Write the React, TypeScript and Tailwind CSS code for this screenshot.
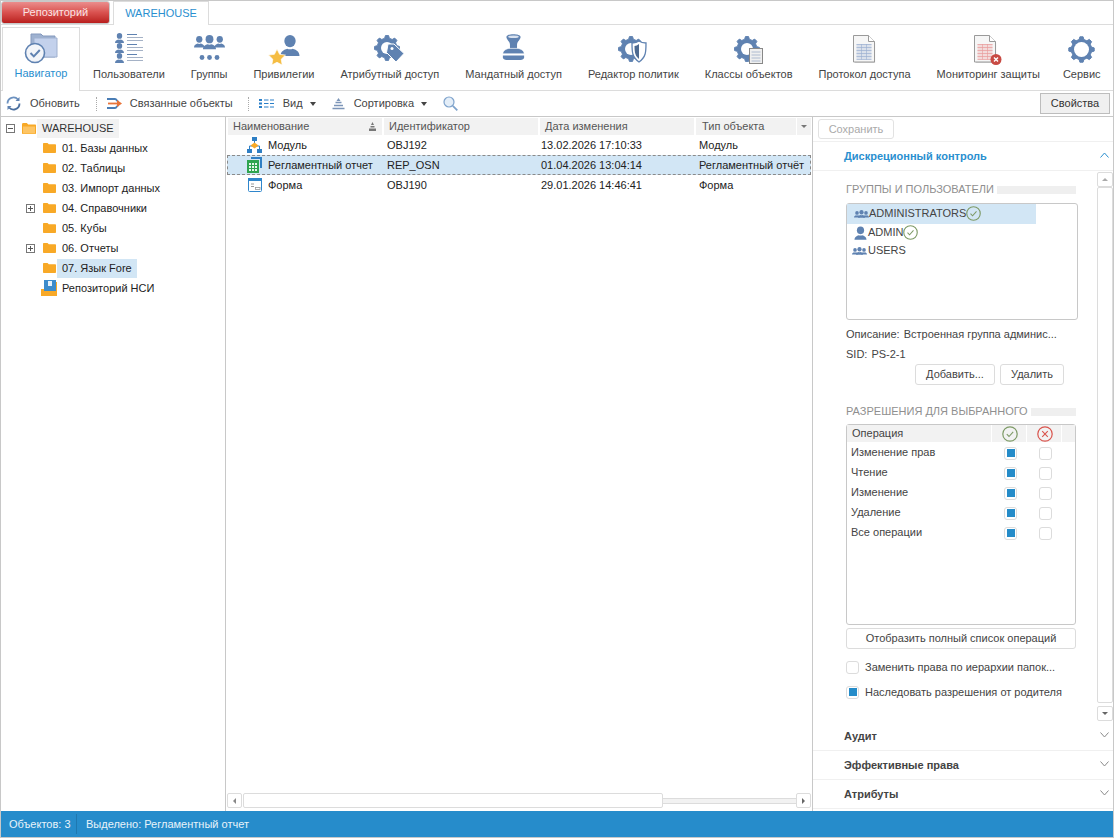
import React from 'react';

// ─── Icons ───────────────────────────────────────────────────────────────────

const STEEL = '#5f82b1';

function gearPath(cx: number, cy: number, outer: number, inner: number, teeth: number): string {
  const pts: string[] = [];
  const step = (Math.PI * 2) / teeth;
  for (let i = 0; i < teeth; i++) {
    const a = i * step - Math.PI / 2;
    const w = step * 0.2;
    const coords: [number, number][] = [
      [inner, a - w * 1.5],
      [outer, a - w * 0.8],
      [outer, a + w * 0.8],
      [inner, a + w * 1.5],
    ];
    coords.forEach(([r, t]) => pts.push(`${(cx + r * Math.cos(t)).toFixed(2)} ${(cy + r * Math.sin(t)).toFixed(2)}`));
  }
  return `M${pts.join('L')}Z`;
}

function Gear({ cx, cy, outer, hole }: { cx: number; cy: number; outer: number; hole: number }) {
  return (
    <>
      <path d={gearPath(cx, cy, outer, outer * 0.8, 8)} fill={STEEL} stroke={STEEL} strokeLinejoin="round" />
      <circle cx={cx} cy={cy} r={hole} fill="#fff" />
    </>
  );
}

function Person({ x = 0, y = 0, s = 1, fill = STEEL }: { x?: number; y?: number; s?: number; fill?: string }) {
  return (
    <g transform={`translate(${x} ${y}) scale(${s})`} fill={fill}>
      <ellipse cx="5" cy="3.2" rx="3" ry="3.2" />
      <path d="M0 11c0-2.5 2-3.3 3.5-3.8.9.4 2.1.4 3 0C8 7.7 10 8.500 10 11z" />
    </g>
  );
}

function Folder({ open }: { open?: boolean }) {
  if (open) {
    return (
      <svg width="14" height="11" viewBox="0 0 14 11" className="shrink-0">
        <path d="M0 1.5C0 .7.5 0 1.2 0h3.600l1.400 1.400H13c.6 0 1 .4 1 1V10c0 .6-.4 1-1 1H1c-.6 0-1-.4-1-1z" fill="#f8a927" />
        <rect x="1" y="3.5" width="12" height="7" fill="#fdc565" />
      </svg>
    );
  }
  return (
    <svg width="13" height="10" viewBox="0 0 13 10" className="shrink-0">
      <path d="M0 1C0 .4.4 0 1 0h3.500l1.300 1.300H12c.6 0 1 .4 1 1V9c0 .6-.4 1-1 1H1c-.6 0-1-.4-1-1z" fill="#f8a927" />
    </svg>
  );
}

function Expander({ minus }: { minus?: boolean }) {
  return (
    <svg width="9" height="9" viewBox="0 0 9 9" className="shrink-0">
      <rect x=".5" y=".5" width="8" height="8" fill="#fff" stroke="#777" />
      <path d={minus ? 'M2 4.500h5' : 'M2 4.500h5M4.500 2v5'} stroke="#555" />
    </svg>
  );
}

function CheckCircle({ size = 15 }: { size?: number }) {
  return (
    <svg width={size} height={size} viewBox="0 0 16 16" className="shrink-0">
      <circle cx="8" cy="8" r="7.2" fill="none" stroke="#7d9a66" strokeWidth="1.2" />
      <path d="M4.8 8.200l2.200 2.300 4.200-4.700" fill="none" stroke="#7d9a66" strokeWidth="1.1" />
    </svg>
  );
}

function CrossCircle() {
  return (
    <svg width="16" height="16" viewBox="0 0 16 16" className="shrink-0">
      <circle cx="8" cy="8" r="7.2" fill="none" stroke="#d9534c" strokeWidth="1.2" />
      <path d="M5.2 5.200l5.600 5.600M10.800 5.200l-5.600 5.600" stroke="#d9534c" strokeWidth="1.1" />
    </svg>
  );
}

function GroupSmall() {
  return (
    <svg width="15" height="11" viewBox="0 0 15 11" className="shrink-0">
      <Person x={0} y={3} s={0.6} />
      <Person x={4} y={2} s={0.7} />
      <Person x={9} y={3} s={0.6} />
    </svg>
  );
}

function PersonSmall() {
  return (
    <svg width="13" height="14" viewBox="0 0 13 14" className="shrink-0">
      <Person x={0.5} y={0.5} s={1.2} />
    </svg>
  );
}

function SheetBase({ tint }: { tint: string }) {
  const rows = [9, 12, 15, 18, 21, 24];
  return (
    <>
      <path d="M1.500 1.500h14l6 6v20h-20z" fill="#d8d8d8" transform="translate(.6 .6)" />
      <path d="M.5 .5h15l6 6v20.500H.5z" fill="#f6f6f6" stroke="#9a9a9a" />
      <path d="M15.500 .5v6h6" fill="#fff" stroke="#9a9a9a" />
      <rect x="3.500" y="9" width="15" height="15" fill={tint} opacity="0.3" />
      {rows.map((r) => (
        <path key={r} d={`M3.500 ${r + 0.5}h15`} stroke={tint} opacity="0.7" />
      ))}
      <path d="M8.500 9v15.500M13.500 9v15.500" stroke={tint} opacity="0.6" />
    </>
  );
}

function RibbonIcon({ kind }: { kind: string }) {
  switch (kind) {
    case 'nav':
      return (
        <svg width="40" height="34" viewBox="0 0 40 34">
          <path d="M10 3h10l2 2h12v21H10z" fill="#9eb1d0" stroke="#8499bd" />
          <path d="M13 7h23v19H13z" fill="#c3d1ec" stroke="#9fb0cf" />
          <circle cx="14" cy="22" r="9.5" fill="#f3f5f9" stroke="#5f82b1" strokeWidth="1.6" />
          <path d="M9.500 22l3.300 3.400 6-6.400" fill="none" stroke="#5f82b1" strokeWidth="2" />
        </svg>
      );
    case 'users':
      return (
        <svg width="28" height="30" viewBox="0 0 28 30">
          <Person x={0} y={0} s={0.9} />
          <Person x={0} y={10} s={0.9} />
          <Person x={0} y={20} s={0.9} />
          {[1, 11, 21].map((y) => (
            <g key={y} stroke="#a5b2c6">
              <path d={`M12 ${y + 0.5}h10`} stroke="#5f82b1" />
              <path d={`M12 ${y + 3.5}h16M12 ${y + 6.5}h16`} />
            </g>
          ))}
        </svg>
      );
    case 'groups':
      return (
        <svg width="31" height="30" viewBox="0 0 31 30">
          <Person x={0} y={3} s={1.05} />
          <Person x={9} y={2} s={1.3} />
          <Person x={20.5} y={3} s={1.05} />
          <circle cx="8" cy="24.500" r="2.4" fill={STEEL} />
          <circle cx="15.500" cy="24.500" r="2.4" fill={STEEL} />
          <circle cx="23" cy="24.500" r="2.4" fill={STEEL} />
        </svg>
      );
    case 'priv':
      return (
        <svg width="32" height="33" viewBox="0 0 32 33">
          <Person x={12.5} y={2} s={1.9} />
          <path d="M9 16l2.600 5.300 5.900.8-4.300 4.100 1 5.800L9 29.300 3.800 32l1-5.800-4.300-4.100 5.900-.8z" fill="#f5bd43" stroke="#fff" strokeWidth=".7" />
        </svg>
      );
    case 'attr':
      return (
        <svg width="32" height="30" viewBox="0 0 32 30" className="mt-[2px]">
          <Gear cx={13} cy={13} outer={12.5} hole={6} />
          <path d="M14 9h6l10 9.500-8 8.500-9.500-9.500z" fill={STEEL} stroke="#fff" />
          <circle cx="18" cy="13.500" r="1.5" fill="#fff" />
        </svg>
      );
    case 'stamp':
      return (
        <svg width="23" height="29" viewBox="0 0 26 30">
          <path d="M5 3c0-4 16-4 16 0 0 3-4 5-4 9v4H9v-4c0-4-4-6-4-9z" fill={STEEL} />
          <ellipse cx="13" cy="2.800" rx="6" ry="1.500" fill="#d9e2ef" />
          <path d="M1 22c0-4 5-6 8-6h8c3 0 8 2 8 6z" fill={STEEL} stroke="#fff" strokeWidth=".6" />
          <path d="M1 24h24v2c0 2-2 3-4 3H5c-2 0-4-1-4-3z" fill={STEEL} />
        </svg>
      );
    case 'policy':
      return (
        <svg width="30" height="28" viewBox="0 0 30 28" className="mt-[3px]">
          <Gear cx={13} cy={13} outer={12.5} hole={6} />
          <path d="M21 5c2 1.500 4.500 2 7 2 0 9 0 14-7 19-7-5-7-10-7-19 2.500 0 5-.5 7-2z" fill="#fff" stroke={STEEL} strokeWidth="1.3" />
          <path d="M21 8v15c-3.500-3-4.500-6-4.500-13 1.700 0 3-1 4.500-2z" fill="#4d6a91" />
        </svg>
      );
    case 'classes':
      return (
        <svg width="30" height="28" viewBox="0 0 30 28" className="mt-[3px]">
          <Gear cx={13} cy={13} outer={12.5} hole={6} />
          <rect x="15.500" y="12.500" width="13" height="15" fill="#efefef" stroke="#888" />
          <path d="M17.500 16h9M17.500 19h9M17.500 22h9M17.500 25h9" stroke="#aebbd0" />
        </svg>
      );
    case 'log':
      return (
        <svg width="23" height="29" viewBox="0 0 23 29" className="mt-[2px]">
          <SheetBase tint="#9bb0d2" />
        </svg>
      );
    case 'monitor':
      return (
        <svg width="29" height="31" viewBox="0 0 29 31" className="mt-[2px]">
          <SheetBase tint="#e99a9a" />
          <circle cx="22" cy="24.500" r="5.5" fill="#c84a43" />
          <path d="M20 22.500l4 4M24 22.500l-4 4" stroke="#fff" strokeWidth="1.400" />
        </svg>
      );
    default:
      return (
        <svg width="27" height="27" viewBox="0 0 27 27" className="mt-[3px]">
          <Gear cx={13.5} cy={13.5} outer={12.8} hole={7.5} />
        </svg>
      );
  }
}

function Chevron({ up }: { up?: boolean }) {
  return (
    <svg width="9" height="6" viewBox="0 0 9 6" className="-mt-[3px]">
      <path d={up ? 'M.5 5.500l4-4.500 4 4.500' : 'M.5 .5l4 4.500 4-4.500'} fill="none" stroke={up ? '#2a8fcf' : '#8a8a8a'} />
    </svg>
  );
}

function Caret() {
  return <span className="ml-[7px] h-0 w-0 border-x-[3.5px] border-t-[4px] border-x-transparent border-t-[#444]" />;
}

function Box({ checked }: { checked?: boolean }) {
  return (
    <span className="flex h-[13px] w-[13px] shrink-0 items-center justify-center rounded-[3px] border border-[#dcdcdc] bg-white">
      {checked && <span className="h-[8px] w-[8px] bg-[#258cc9]" />}
    </span>
  );
}

// ─── Data ────────────────────────────────────────────────────────────────────

const RIBBON = [
  { kind: 'users', label: 'Пользователи' },
  { kind: 'groups', label: 'Группы' },
  { kind: 'priv', label: 'Привилегии' },
  { kind: 'attr', label: 'Атрибутный доступ' },
  { kind: 'stamp', label: 'Мандатный доступ' },
  { kind: 'policy', label: 'Редактор политик' },
  { kind: 'classes', label: 'Классы объектов' },
  { kind: 'log', label: 'Протокол доступа' },
  { kind: 'monitor', label: 'Мониторинг защиты' },
  { kind: 'service', label: 'Сервис' },
];

const TREE = [
  { label: '01. Базы данных' },
  { label: '02. Таблицы' },
  { label: '03. Импорт данных' },
  { label: '04. Справочники', plus: true },
  { label: '05. Кубы' },
  { label: '06. Отчеты', plus: true },
  { label: '07. Язык Fore', selected: true },
];

const OPERATIONS = ['Изменение прав', 'Чтение', 'Изменение', 'Удаление', 'Все операции'];

// ─── Sections ────────────────────────────────────────────────────────────────

function TopBar() {
  return (
    <div className="flex h-[24px] items-start border-b border-[#dcdcdc]">
      <button className="h-[23px] w-[109px] rounded-[3px] border border-[#c9c9c9] bg-gradient-to-b from-[#ea8d8d] via-[#d9514f] to-[#b91c1c] text-[11px] text-[#fbe3e3]">
        Репозиторий
      </button>
      <div className="relative ml-[3px] flex h-[24px] w-[96px] items-center justify-center border-x border-t border-[#dcdcdc] bg-white text-[11px] text-[#2a8fcf]">
        WAREHOUSE
      </div>
    </div>
  );
}

function Ribbon() {
  return (
    <div className="flex h-[66px] items-end border-b border-[#dcdcdc] pl-px">
      <div className="relative top-px flex h-[64px] w-[78px] shrink-0 flex-col items-center border-x border-t border-[#dcdcdc] bg-white pt-[3px]">
        <div className="h-[35px]">
          <RibbonIcon kind="nav" />
        </div>
        <span className="text-[11px] leading-[14px] text-[#2a8fcf]">Навигатор</span>
      </div>
      {RIBBON.map((item) => (
        <div key={item.kind} className="flex h-[64px] shrink-0 flex-col items-center whitespace-nowrap px-[13px] pt-[7px] last:-ml-[3px]">
          <div className="h-[33px]">
            <RibbonIcon kind={item.kind} />
          </div>
          <span className="mt-[1px] text-[11px] leading-[14px] text-[#444]">{item.label}</span>
        </div>
      ))}
    </div>
  );
}

function Toolbar() {
  return (
    <div className="flex h-[26px] items-center border-b border-[#c8c8c8] pl-[5px] pr-[3px] text-[11px] text-[#444]">
      <svg width="15" height="15" viewBox="0 0 15 15" className="shrink-0">
        <path d="M1.500 7.500A6 6 0 0 1 12 3.500" fill="none" stroke="#6d92c0" strokeWidth="1.8" />
        <path d="M13.500 7.500A6 6 0 0 1 3 11.500" fill="none" stroke="#4a6f9f" strokeWidth="1.8" />
        <path d="M13.500 1v4h-4zM1.500 14v-4h4z" fill="#5f82b1" />
      </svg>
      <span className="ml-[9px]">Обновить</span>
      <span className="ml-[16px] h-[14px] border-l border-dotted border-[#aaa]" />
      <svg width="15" height="13" viewBox="0 0 15 13" className="ml-[10px] shrink-0">
        <path d="M0 2h8c2 0 2 3 4 3" fill="none" stroke="#4a7db5" strokeWidth="1.8" />
        <path d="M0 11h8c2 0 2-3 4-3" fill="none" stroke="#4a7db5" strokeWidth="1.8" />
        <path d="M1 6.500h10" stroke="#e8743a" strokeWidth="1.8" />
        <path d="M10 3l5 3.500-5 3.500z" fill="#e8743a" />
      </svg>
      <span className="ml-[8px]">Связанные объекты</span>
      <span className="ml-[15px] h-[14px] border-l border-dotted border-[#aaa]" />
      <svg width="15" height="9" viewBox="0 0 15 9" className="ml-[10px] shrink-0">
        <path d="M0 1h3M0 4.500h3M0 8h3" stroke="#2a7fc8" strokeWidth="2" />
        <path d="M5 1h4.500M11 1h4M5 4.500h4.500M11 4.500h4M5 8h4.500M11 8h4" stroke="#2a7fc8" />
      </svg>
      <span className="ml-[9px]">Вид</span>
      <Caret />
      <svg width="13" height="12" viewBox="0 0 13 12" className="ml-[16px] shrink-0">
        <path d="M6.500 0l2 3h-4z" fill="#7c95b8" />
        <path d="M3.500 4.500h6M2 7.500h9M.5 10.500h12" stroke="#7c95b8" strokeWidth="1.5" />
      </svg>
      <span className="ml-[9px]">Сортировка</span>
      <Caret />
      <svg width="15" height="15" viewBox="0 0 15 15" className="ml-[16px] shrink-0">
        <circle cx="6" cy="6" r="5" fill="#e4eef8" stroke="#7fa3cc" strokeWidth="1.2" />
        <path d="M9.800 9.800l4.500 4.500" stroke="#7fa3cc" strokeWidth="1.8" />
      </svg>
      <button className="ml-auto h-[21px] w-[70px] border border-[#bdbdbd] bg-[#f0f0f0] text-[11px] text-[#333]">Свойства</button>
    </div>
  );
}

function Tree() {
  return (
    <div className="w-[225px] shrink-0 border-r border-[#c8c8c8] pl-[5px] pt-px text-[11px] text-[#222]">
      <div className="flex h-[20px] items-center">
        <Expander minus />
        <span className="ml-[7px]">
          <Folder open />
        </span>
        <span className="ml-[1px] flex h-[19px] items-center bg-[#f2f2f2] px-[5px] text-[#333]">WAREHOUSE</span>
      </div>
      {TREE.map((row) => (
        <div key={row.label} className="flex h-[20px] items-center">
          <span className="flex w-[37px] justify-end pr-[4px]">{row.plus && <span className="flex w-[13px]"><Expander /></span>}</span>
          <Folder />
          <span className={`ml-[1px] flex h-[19px] items-center px-[5px] ${row.selected ? 'bg-[#d2e6f5]' : ''}`}>{row.label}</span>
        </div>
      ))}
      <div className="flex h-[20px] items-center pl-[35px]">
        <svg width="16" height="16" viewBox="0 0 16 16" className="shrink-0">
          <path d="M0 9h3V2h13v14H0z" fill="#f8a927" />
          <rect x="3" y="0" width="12" height="11" fill="#3d8ccb" />
          <rect x="7" y="1" width="4" height="5" fill="#e6f1fa" />
        </svg>
        <span className="ml-[5px]">Репозиторий НСИ</span>
      </div>
    </div>
  );
}

function GridRow({ icon, name, id, date, type, selected }: { icon: React.ReactNode; name: string; id: string; date: string; type: string; selected?: boolean }) {
  return (
    <div className={`mx-px flex h-[20px] items-center text-[11px] text-[#222] ${selected ? 'border border-dashed border-[#8a8a8a] bg-[#d2e6f5]' : 'border border-transparent'}`}>
      <span className="flex w-[19px] shrink-0" />
      <span className="flex w-[15px] shrink-0 justify-center">{icon}</span>
      <span className="ml-[6px] w-[119px] shrink-0 whitespace-nowrap">{name}</span>
      <span className="w-[154px] shrink-0">{id}</span>
      <span className="w-[158px] shrink-0">{date}</span>
      <span className="whitespace-nowrap">{type}</span>
    </div>
  );
}

function ObjectGrid() {
  return (
    <div className="flex min-w-0 flex-1 flex-col border-r border-[#c8c8c8]">
      <div className="flex flex-1 flex-col pt-px">
        <div className="flex h-[17px] pl-[2px] text-[11px] text-[#555]">
          <div className="flex w-[154px] items-center justify-between bg-[#f2f2f2] pl-[5px] pr-[5px]">
            Наименование
            <svg width="9" height="9" viewBox="0 0 9 9">
              <path d="M4.500 0l1.500 3h-3zM2.500 4h4v1.500h-4zM1 6.500h7V9H1z" fill="#777" />
            </svg>
          </div>
          <div className="ml-[2px] flex w-[154px] items-center bg-[#f2f2f2] pl-[5px]">Идентификатор</div>
          <div className="ml-[2px] flex w-[154px] items-center bg-[#f2f2f2] pl-[5px]">Дата изменения</div>
          <div className="ml-[2px] flex w-[100px] items-center bg-[#f2f2f2] pl-[6px]">Тип объекта</div>
          <div className="ml-[1px] flex w-[14px] items-center justify-center bg-[#f2f2f2]">
            <span className="h-0 w-0 border-x-[3px] border-t-[3px] border-x-transparent border-t-[#777]" />
          </div>
        </div>
        <GridRow
          name="Модуль"
          id="OBJ192"
          date="13.02.2026 17:10:33"
          type="Модуль"
          icon={
            <svg width="15" height="16" viewBox="0 0 15 16">
              <path d="M5 0h5v4H5zM0 12h5v4H0zM10 12h5v4h-5z" fill="#2f7fc4" />
              <path d="M7.500 4v2M2.500 12V9h10v3" fill="none" stroke="#2f7fc4" />
              <path d="M7.500 5.500l4 3-4 3-4-3z" fill="#f8a927" />
            </svg>
          }
        />
        <GridRow
          selected
          name="Регламентный отчет"
          id="REP_OSN"
          date="01.04.2026 13:04:14"
          type="Регламентный отчёт"
          icon={
            <svg width="15" height="16" viewBox="0 0 15 16">
              <path d="M4 0h11v11h-2V2H4z" fill="#2f7fc4" />
              <path d="M0 3h12v13H0z" fill="#2ea44f" />
              <path d="M2 6h2v2H2zM5 6h2v2H5zM8 6h2v2H8zM2 9h2v2H2zM5 9h2v2H5zM8 9h2v2H8zM2 12h2v2H2zM5 12h2v2H5zM8 12h2v2H8z" fill="#e6f6ea" />
            </svg>
          }
        />
        <GridRow
          name="Форма"
          id="OBJ190"
          date="29.01.2026 14:46:41"
          type="Форма"
          icon={
            <svg width="14" height="14" viewBox="0 0 14 14">
              <rect x=".5" y=".5" width="13" height="13" rx="1" fill="#fff" stroke="#2f86cc" />
              <rect x="0" y="0" width="14" height="3" fill="#2f86cc" />
              <path d="M3 6h3M3 8.500h3" stroke="#999" />
              <rect x="7.500" y="9.500" width="4.500" height="2" fill="#fff" stroke="#999" strokeWidth=".8" />
            </svg>
          }
        />
      </div>
      <div className="mb-[3px] flex h-[15px] items-center pl-px pr-px">
        <div className="flex h-[15px] w-[15px] shrink-0 items-center justify-center rounded-[2px] border border-[#dcdcdc]">
          <span className="h-0 w-0 border-y-[3px] border-r-[3px] border-y-transparent border-r-[#888]" />
        </div>
        <div className="ml-px h-[15px] w-[420px] shrink-0 rounded-[2px] border border-[#dcdcdc]" />
        <div className="h-[6px] flex-1 border-y border-[#dcdcdc] bg-[#f2f2f2]" />
        <div className="flex h-[15px] w-[15px] shrink-0 items-center justify-center rounded-[2px] border border-[#dcdcdc]">
          <span className="h-0 w-0 border-y-[3px] border-l-[3px] border-y-transparent border-l-[#666]" />
        </div>
      </div>
    </div>
  );
}

function SectionTitle({ label }: { label: string }) {
  return (
    <div className="mr-[2px] flex h-[13px] items-center gap-[3px] whitespace-nowrap text-[11px] text-[#8f8f8f]">
      {label}
      <span className="h-[8px] flex-1 bg-[#efefef]" />
    </div>
  );
}

function SmallButton({ label, className }: { label: string; className: string }) {
  return <button className={`h-[21px] rounded-[3px] border border-[#dcdcdc] bg-white text-[11px] text-[#444] ${className}`}>{label}</button>;
}

function AccordionRow({ label }: { label: string }) {
  return (
    <div className="flex h-[29px] items-center justify-between border-b border-[#f0f0f0] pl-[31px] pr-[4px] text-[11px] font-bold text-[#444]">
      {label}
      <Chevron />
    </div>
  );
}

function AccessPanel() {
  return (
    <div className="flex w-[300px] shrink-0 flex-col">
      <div className="flex h-[25px] items-start border-b border-[#f0f0f0] pl-[5px] pt-[2px]">
        <button className="h-[20px] w-[76px] rounded-[3px] border border-[#e2e2e2] bg-white text-[11px] text-[#aaa]">Сохранить</button>
      </div>
      <div className="flex h-[29px] items-center justify-between border-b border-[#f0f0f0] pl-[31px] pr-[4px] text-[11px] font-bold text-[#2a8fcf]">
        Дискреционный контроль
        <Chevron up />
      </div>
      <div className="flex flex-1">
        <div className="w-[284px] pl-[33px] pr-[19px] pt-[12px] text-[11px] text-[#444]">
          <SectionTitle label="ГРУППЫ И ПОЛЬЗОВАТЕЛИ" />
          <div className="mt-[7px] h-[117px] rounded-[3px] border border-[#c8c8c8]">
            <div className="flex h-[20px] w-[189px] items-center bg-[#d2e6f5] pb-[1px] pl-[7px]">
              <GroupSmall />
              ADMINISTRATORS
              <CheckCircle />
            </div>
            <div className="flex h-[17px] items-center pl-[7px]">
              <PersonSmall />
              <span className="ml-[1px]">ADMIN</span>
              <CheckCircle />
            </div>
            <div className="flex h-[18px] items-center gap-px pl-[5px]">
              <GroupSmall />
              USERS
            </div>
          </div>
          <div className="mt-[7px] flex h-[14px] items-center whitespace-nowrap">
            Описание:
            <span className="ml-[4px]">Встроенная группа админис...</span>
          </div>
          <div className="mt-[6px] flex h-[14px] items-center">
            SID:
            <span className="ml-[4px]">PS-2-1</span>
          </div>
          <div className="mt-[3px] flex justify-end gap-[5px] pr-[14px]">
            <SmallButton label="Добавить..." className="w-[80px]" />
            <SmallButton label="Удалить" className="w-[64px]" />
          </div>
          <div className="mt-[20px]">
            <SectionTitle label="РАЗРЕШЕНИЯ ДЛЯ ВЫБРАННОГО" />
          </div>
          <div className="mr-[2px] mt-[6px] h-[201px] rounded-[3px] border border-[#c8c8c8]">
            <div className="flex h-[17px] gap-[1px] text-[#444]">
              <div className="flex w-[144px] items-center bg-[#f2f2f2] pl-[5px]">Операция</div>
              <div className="flex w-[34px] items-center justify-center bg-[#f2f2f2] pl-[2px]">
                <CheckCircle size={16} />
              </div>
              <div className="flex w-[34px] items-center justify-center bg-[#f2f2f2] pl-[2px]">
                <CrossCircle />
              </div>
              <div className="flex-1 bg-[#f2f2f2]" />
            </div>
            {OPERATIONS.map((op) => (
              <div key={op} className="flex h-[20px] items-center pt-[2px]">
                <span className="-mt-[2px] w-[157px] pl-[4px]">{op}</span>
                <Box checked />
                <span className="ml-[22px]">
                  <Box />
                </span>
              </div>
            ))}
          </div>
          <SmallButton label="Отобразить полный список операций" className="mt-[3px] w-[230px]" />
          <div className="mt-[11px] flex h-[14px] items-center gap-[6px]">
            <Box />
            Заменить права по иерархии папок...
          </div>
          <div className="mt-[11px] flex h-[14px] items-center gap-[6px]">
            <Box checked />
            Наследовать разрешения от родителя
          </div>
        </div>
        <div className="flex flex-1 flex-col pt-[1px]">
          <div className="flex h-[15px] w-[16px] items-center justify-center rounded-[2px] border border-[#dcdcdc]">
            <span className="h-0 w-0 border-x-[3px] border-b-[3px] border-x-transparent border-b-[#aaa]" />
          </div>
          <div className="h-[516px] w-[16px] rounded-[2px] border border-[#dcdcdc]" />
          <div className="mt-[3px] flex h-[15px] w-[16px] items-center justify-center rounded-[2px] border border-[#dcdcdc]">
            <span className="h-0 w-0 border-x-[3px] border-t-[3px] border-x-transparent border-t-[#666]" />
          </div>
        </div>
      </div>
      <div className="mb-[2px]">
        <AccordionRow label="Аудит" />
        <AccordionRow label="Эффективные права" />
        <AccordionRow label="Атрибуты" />
      </div>
    </div>
  );
}

function StatusBar() {
  return (
    <div className="flex h-[26px] items-center bg-[#268ccb] text-[11px] text-[#e8f3fa]">
      <span className="flex h-[20px] w-[76px] items-center border-r border-[#1f78b0] pl-[8px]">Объектов: 3</span>
      <span className="ml-[9px]">Выделено: Регламентный отчет</span>
    </div>
  );
}

export default function App() {
  return (
    <div className="flex h-[838px] w-[1114px] flex-col overflow-hidden border border-[#c8c8c8] bg-white font-['Liberation_Sans',Arial,sans-serif]">
      <TopBar />
      <Ribbon />
      <Toolbar />
      <div className="flex min-h-0 flex-1">
        <Tree />
        <ObjectGrid />
        <AccessPanel />
      </div>
      <StatusBar />
    </div>
  );
}
